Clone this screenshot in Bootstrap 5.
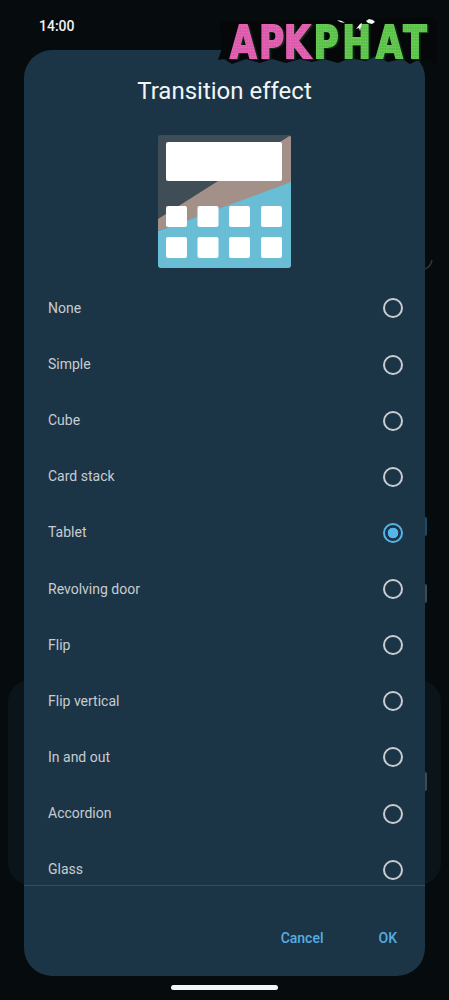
<!DOCTYPE html>
<html lang="en">
<head>
<meta charset="utf-8">
<title>Transition effect</title>
<link href="https://cdn.jsdelivr.net/npm/bootstrap@5.3.0/dist/css/bootstrap.min.css" rel="stylesheet">
<style>
html,body{height:100%;}
body{background:#060b0d;font-family:Roboto,"Liberation Sans",sans-serif;overflow:hidden;}
.screen{width:449px;height:1000px;overflow:hidden;}
.status-row{height:50px;padding:18px 0 0 39px;color:#f1f3f3;font-size:14px;font-weight:500;line-height:16px;}
.sheet{width:401px;height:926px;margin-left:24px;background:#1c3546;border-radius:28px;overflow:hidden;position:relative;z-index:1;}
.sheet-title{height:85px;padding-top:25px;margin:0;color:#f2f5f6;font-size:24px;font-weight:400;line-height:32px;text-align:center;}
.art{width:133px;height:133px;display:block;}
.art-wrap{height:146px;}
.choice-list{height:607px;overflow:hidden;padding:0;margin:0;list-style:none;}
.choice{height:56.15px;padding:0 22px 0 24px;margin:0;color:#c6ccd1;font-size:14px;cursor:pointer;}
.choice .form-check-input{width:20px;height:20px;margin:0;background:transparent;border:2px solid #c8ccd3;box-shadow:none;}
.choice .form-check-input:checked{border-color:#55b4ea;background:radial-gradient(circle,#55b4ea 0,#55b4ea 5px,transparent 5.6px);}
.sheet-foot{height:91px;border-top:1px solid #3b4d5a;padding:14px 28px 0 0;gap:55px;}
.sheet-foot .btn{padding:0;border:0;color:#55aee0;font-size:14px;font-weight:500;line-height:20px;}
.home-pill{width:107px;height:5px;background:#f4f5f5;border-radius:3px;margin:9px auto 0;}
.ghost-panel{position:absolute;left:8px;top:680px;width:433px;height:205px;background:#0a1419;border-radius:22px;}
.ghost-mark{position:absolute;left:425px;width:2px;height:19px;border-radius:0 2px 2px 0;background:#3c4a52;}
.mark-a{top:517px;background:#1d4a66;}
.mark-b{top:584px;}
.mark-c{top:772px;}
.ghost-arc{position:absolute;left:424px;top:258px;width:9px;height:12px;opacity:.6;}
.brand{position:absolute;left:216px;top:12px;width:224px;height:62px;z-index:2;}
.brand text{font-family:"DejaVu Sans",sans-serif;font-weight:700;font-size:44px;stroke-width:1.8px;paint-order:stroke;filter:drop-shadow(2px 1.5px 0 #123018);}
.brand .pink{fill:url(#dotsPink);stroke:#e562b4;}
.brand .lime{fill:url(#dotsLime);stroke:#65cc52;}
</style>
</head>
<body>
<div class="screen position-relative">
  <div class="ghost-panel"></div>
  <div class="ghost-mark mark-a"></div>
  <div class="ghost-mark mark-b"></div>
  <div class="ghost-mark mark-c"></div>
  <svg class="ghost-arc" viewBox="0 0 9 12" aria-hidden="true"><path d="M1 11C4 10 7 7 8 2" fill="none" stroke="#4a5358" stroke-width="1.5"/></svg>

  <div class="status-row">14:00</div>

  <div class="sheet d-flex flex-column">
    <h1 class="sheet-title">Transition effect</h1>
    <div class="art-wrap d-flex justify-content-center">
      <svg class="art" viewBox="0 0 133 133" aria-hidden="true">
        <defs><clipPath id="artClip"><rect width="133" height="133" rx="3"/></clipPath></defs>
        <g clip-path="url(#artClip)">
          <rect width="133" height="133" fill="#3e4d56"/>
          <polygon points="0,84 133,0 133,48 0,96" fill="#a39089"/>
          <polygon points="0,96 133,47 133,133 0,133" fill="#69bdd5"/>
        </g>
        <g fill="#fff">
          <rect x="8" y="7" width="116" height="39" rx="2"/>
          <rect x="8" y="71" width="21" height="21" rx="2"/><rect x="39.5" y="71" width="21" height="21" rx="2"/><rect x="71" y="71" width="21" height="21" rx="2"/><rect x="103" y="71" width="21" height="21" rx="2"/>
          <rect x="8" y="102" width="21" height="21" rx="2"/><rect x="39.5" y="102" width="21" height="21" rx="2"/><rect x="71" y="102" width="21" height="21" rx="2"/><rect x="103" y="102" width="21" height="21" rx="2"/>
        </g>
      </svg>
    </div>
    <ul class="choice-list">
      <li><label class="choice d-flex align-items-center justify-content-between"><span>None</span><input class="form-check-input" type="radio" name="fx"></label></li>
      <li><label class="choice d-flex align-items-center justify-content-between"><span>Simple</span><input class="form-check-input" type="radio" name="fx"></label></li>
      <li><label class="choice d-flex align-items-center justify-content-between"><span>Cube</span><input class="form-check-input" type="radio" name="fx"></label></li>
      <li><label class="choice d-flex align-items-center justify-content-between"><span>Card stack</span><input class="form-check-input" type="radio" name="fx"></label></li>
      <li><label class="choice d-flex align-items-center justify-content-between"><span>Tablet</span><input class="form-check-input" type="radio" name="fx" checked></label></li>
      <li><label class="choice d-flex align-items-center justify-content-between"><span>Revolving door</span><input class="form-check-input" type="radio" name="fx"></label></li>
      <li><label class="choice d-flex align-items-center justify-content-between"><span>Flip</span><input class="form-check-input" type="radio" name="fx"></label></li>
      <li><label class="choice d-flex align-items-center justify-content-between"><span>Flip vertical</span><input class="form-check-input" type="radio" name="fx"></label></li>
      <li><label class="choice d-flex align-items-center justify-content-between"><span>In and out</span><input class="form-check-input" type="radio" name="fx"></label></li>
      <li><label class="choice d-flex align-items-center justify-content-between"><span>Accordion</span><input class="form-check-input" type="radio" name="fx"></label></li>
      <li><label class="choice d-flex align-items-center justify-content-between"><span>Glass</span><input class="form-check-input" type="radio" name="fx"></label></li>
    </ul>
    <div class="sheet-foot d-flex align-items-center justify-content-end">
      <button type="button" class="btn">Cancel</button>
      <button type="button" class="btn">OK</button>
    </div>
  </div>

  <div class="home-pill"></div>

  <svg class="brand" viewBox="0 0 224 62" role="img" aria-label="APKPHAT">
    <defs>
      <pattern id="dotsPink" width="3" height="3" patternUnits="userSpaceOnUse"><rect width="3" height="3" fill="#e562b4"/><circle cx="1" cy="1" r=".7" fill="#b84a90"/></pattern>
      <pattern id="dotsLime" width="3" height="3" patternUnits="userSpaceOnUse"><rect width="3" height="3" fill="#65cc52"/><circle cx="1" cy="1" r=".7" fill="#459a3a"/></pattern>
    </defs>
    <polygon points="4,10 216,6 222,10 222,46 218,54 214,47 200,49 194,52 186,47 172,50 160,44 150,49 134,46 122,51 108,47 96,50 84,47 70,51 56,47 44,51 30,47 16,52 8,47 2,48 6,36" fill="#050708"/>
    <text transform="scale(.78 1)" y="46"><tspan class="pink" x="18">A</tspan><tspan class="pink" x="55">P</tspan><tspan class="pink" x="87">K</tspan><tspan class="lime" x="125">P</tspan><tspan class="lime" x="162">H</tspan><tspan class="lime" x="205">A</tspan><tspan class="lime" x="240">T</tspan></text>
    <path d="M121 8l5 1 3 2-5-1zM140 17l4-5 2-1-1 4-1 4-1-3zM150 9l3-2 4 1 2 2-3 2-4-1z" fill="#f4f6f4"/>
  </svg>
</div>
<script src="https://cdn.jsdelivr.net/npm/bootstrap@5.3.0/dist/js/bootstrap.bundle.min.js"></script>
</body>
</html>
